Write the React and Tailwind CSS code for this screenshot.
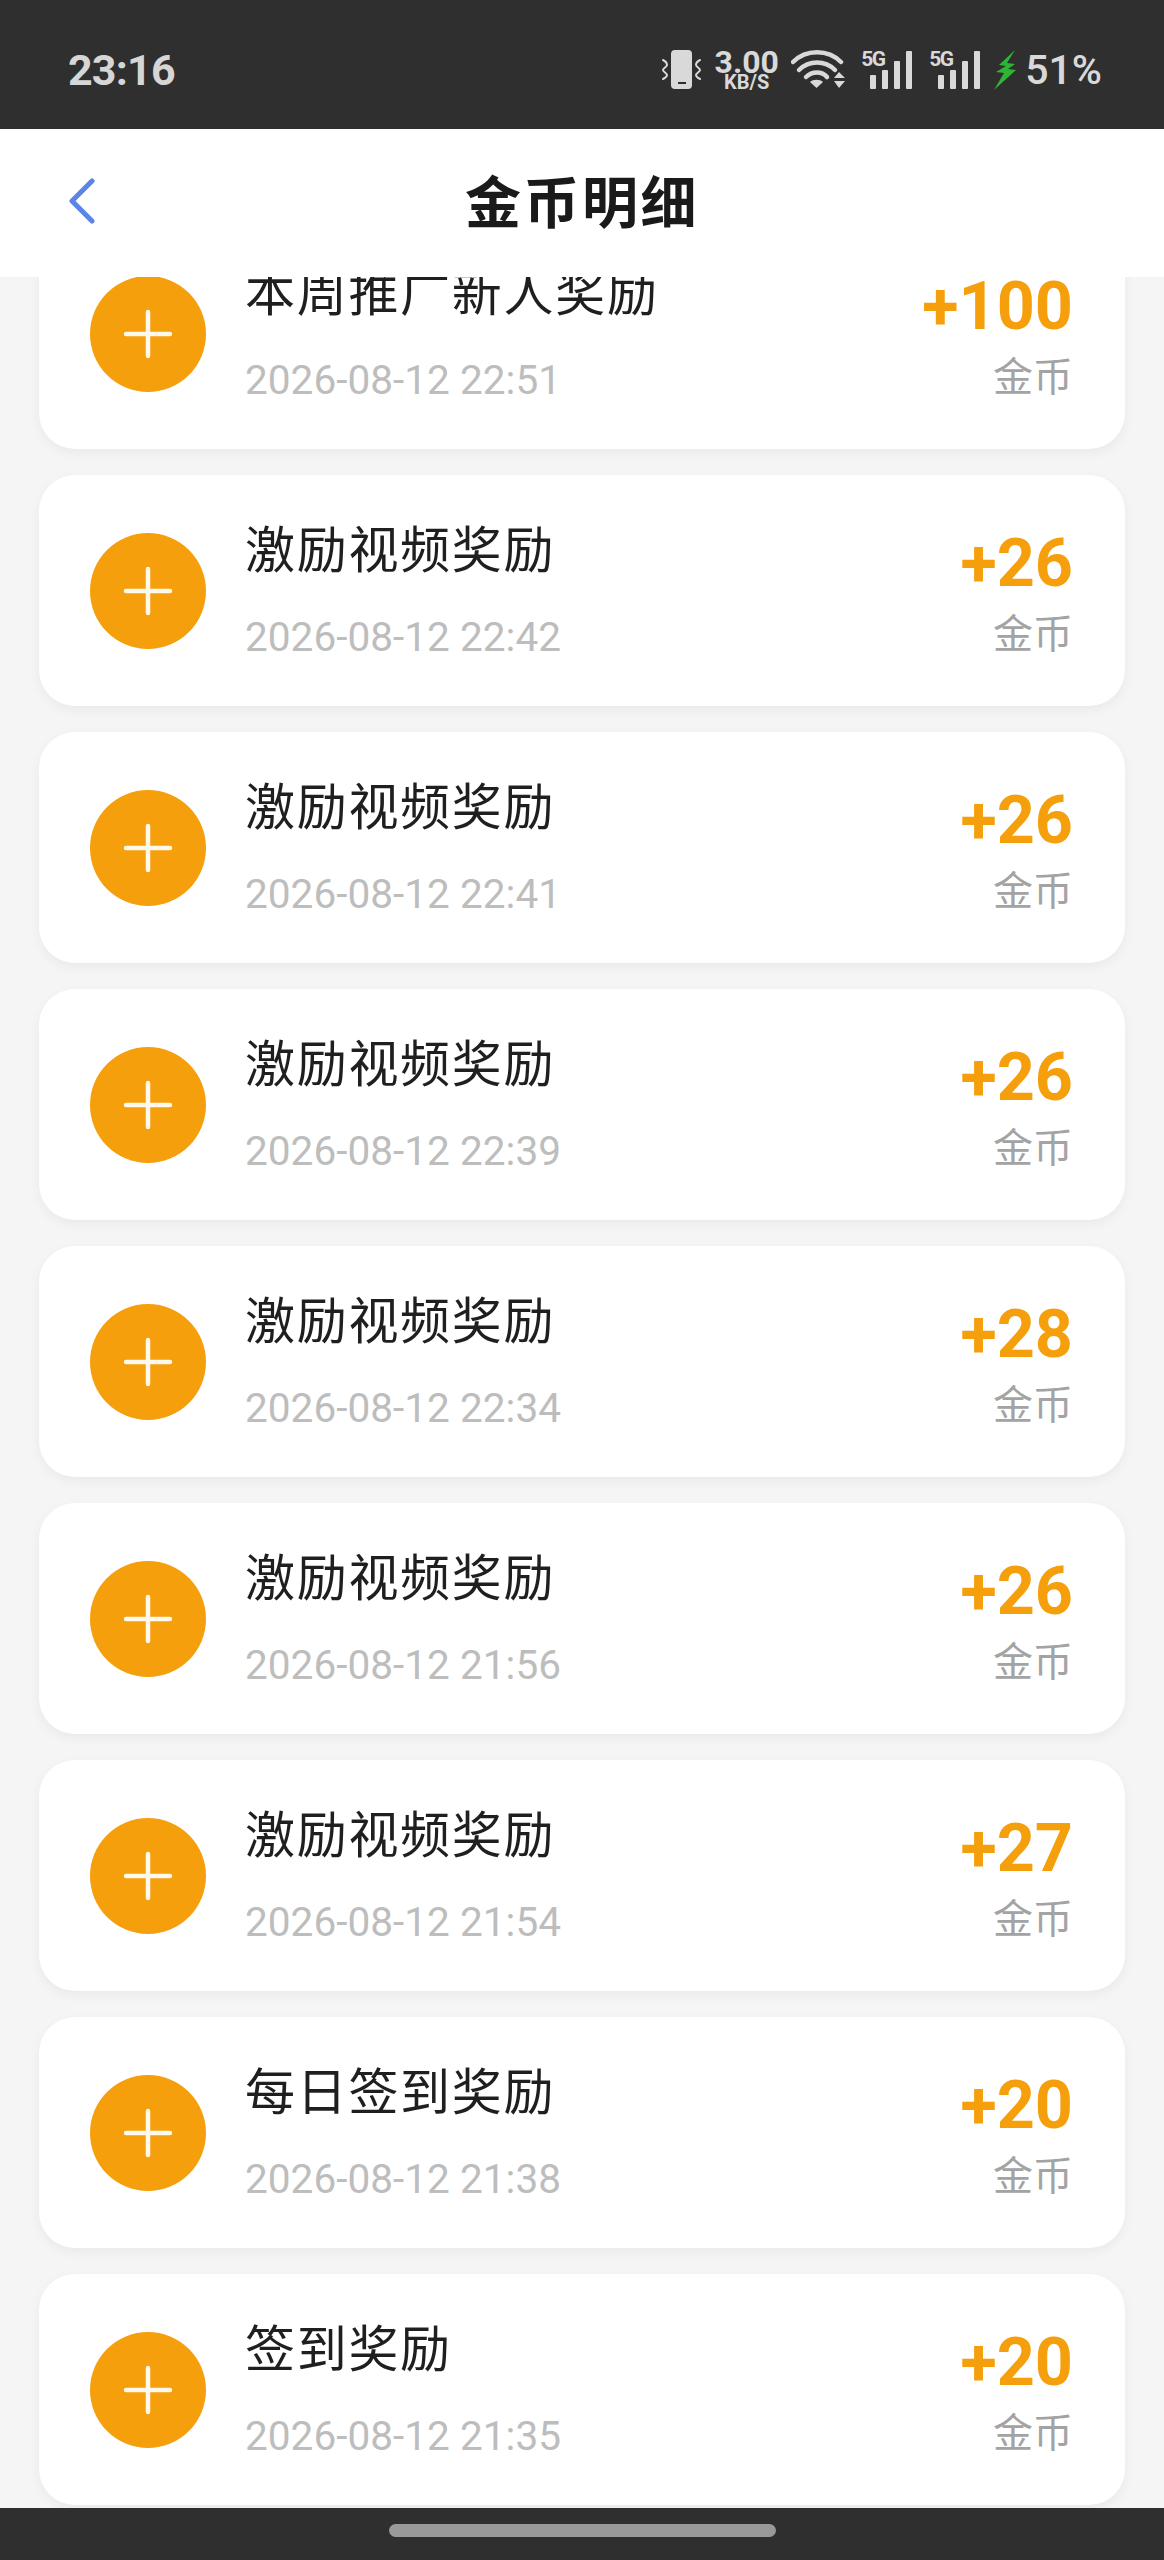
const records = [
  { title: "本周推广新人奖励", time: "2026-08-12 22:51", amount: "+100" },
  { title: "激励视频奖励", time: "2026-08-12 22:42", amount: "+26" },
  { title: "激励视频奖励", time: "2026-08-12 22:41", amount: "+26" },
  { title: "激励视频奖励", time: "2026-08-12 22:39", amount: "+26" },
  { title: "激励视频奖励", time: "2026-08-12 22:34", amount: "+28" },
  { title: "激励视频奖励", time: "2026-08-12 21:56", amount: "+26" },
  { title: "激励视频奖励", time: "2026-08-12 21:54", amount: "+27" },
  { title: "每日签到奖励", time: "2026-08-12 21:38", amount: "+20" },
  { title: "签到奖励", time: "2026-08-12 21:35", amount: "+20" },
];

function VibrateIcon() {
  return (
    <svg width="41" height="40" viewBox="0 0 41 40" fill="none">
      <rect x="10" y="0" width="21" height="39" rx="4" fill="#d9d9d9" />
      <rect x="17" y="32" width="8" height="2" fill="#2f2f2f" />
      <path d="M2 10c2 1 4 3 4 5s-4 3-4 5 4 3 4 5-2 3-4 4M39 10c-2 1-4 3-4 5s4 3 4 5-4 3-4 5 2 3 4 4" stroke="#d9d9d9" strokeWidth="2" strokeLinecap="round" />
    </svg>
  );
}

function WifiIcon() {
  return (
    <svg width="55" height="40" viewBox="0 0 55 40" fill="none">
      <path d="M2 12C15 -1 37 -1 50 12" stroke="#d9d9d9" strokeWidth="4.5" strokeLinecap="round" />
      <path d="M8 20C18 10 34 10 44 20" stroke="#d9d9d9" strokeWidth="4.5" strokeLinecap="round" />
      <path d="M15 27C21 21 31 21 36 27" stroke="#d9d9d9" strokeWidth="4.5" strokeLinecap="round" />
      <path d="M19 32C22 29 29 29 32 32L25.5 38Z" fill="#d9d9d9" />
      <path d="M43 28l5-6 6 6ZM43 31l5 7 6-7Z" fill="#d9d9d9" />
    </svg>
  );
}

function SignalIcon() {
  return (
    <div className="relative w-[51px] h-[40px]">
      <span className="absolute left-0 top-[-3px] text-[21px] leading-[24px] font-bold tracking-[-1.5px] text-[#d9d9d9]">5G</span>
      <div className="absolute right-0 bottom-[1px] flex items-end gap-[6px]">
        <div className="w-[6px] h-[14px] rounded-[1px] bg-[#d9d9d9]" />
        <div className="w-[6px] h-[19px] rounded-[1px] bg-[#d9d9d9]" />
        <div className="w-[6px] h-[28px] rounded-[1px] bg-[#d9d9d9]" />
        <div className="w-[6px] h-[38px] rounded-[1px] bg-[#d9d9d9]" />
      </div>
    </div>
  );
}

function BoltIcon() {
  return (
    <svg width="22" height="40" viewBox="0 0 22 40">
      <path d="M21 0L5 15l7 1-10 6 8 1L0 40 22 20l-8-1 7-5-8-1Z" fill="#2fb536" />
    </svg>
  );
}

function StatusBar() {
  return (
    <div className="h-[129px] shrink-0 bg-[#2f2f2f] flex items-center justify-between pl-[68px] pr-[62px] pt-[10px] text-[#d9d9d9] font-['Roboto',sans-serif]">
      <span className="text-[43px] leading-[50px] font-bold tracking-[-0.8px] text-[#d6d6d6]">23:16</span>
      <div className="flex items-center h-[40px]">
        <VibrateIcon />
        <div className="ml-[12px] w-[65px] flex flex-col items-center">
          <span className="text-[32px] leading-[24px] font-bold">3.00</span>
          <span className="text-[20px] leading-[16px] font-bold">KB/S</span>
        </div>
        <div className="ml-[12px]"><WifiIcon /></div>
        <div className="ml-[15px]"><SignalIcon /></div>
        <div className="ml-[17px]"><SignalIcon /></div>
        <div className="ml-[14px]"><BoltIcon /></div>
        <span className="ml-[9px] text-[41px] leading-[40px] font-medium">51%</span>
      </div>
    </div>
  );
}

function Header() {
  return (
    <header className="relative z-10 h-[148px] shrink-0 bg-white flex items-center justify-center pb-[8px]">
      <button type="button" className="absolute left-[67px] top-[48px]">
        <svg width="28" height="48" viewBox="0 0 28 48" fill="none" className="block">
          <path d="M25 4L5 24l20 20" stroke="#5b83e8" strokeWidth="5" strokeLinecap="round" strokeLinejoin="round" />
        </svg>
      </button>
      <h1 className="text-[56px] leading-[70px] font-bold tracking-[2.5px] text-[#1a1a1a] font-['Noto_Sans_CJK_SC',sans-serif]">金币明细</h1>
    </header>
  );
}

function RecordCard({ record }) {
  return (
    <div className="h-[231px] shrink-0 rounded-[36px] bg-white shadow-[0_4px_12px_rgba(0,0,0,0.05)] pl-[51px] pr-[52px] flex items-center">
      <div className="w-[116px] h-[116px] shrink-0 rounded-full bg-[#f59f0c] flex items-center justify-center">
        <svg width="52" height="52" viewBox="0 0 52 52" fill="none">
          <path d="M26 4v44M4 26h44" stroke="#fff8ec" strokeWidth="4.5" strokeLinecap="round" />
        </svg>
      </div>
      <div className="ml-[39px] flex-1 min-w-0 pb-[3px]">
        <div className="text-[50px] leading-[60px] tracking-[1.7px] text-[#1f1f1f] font-['Noto_Sans_CJK_SC',sans-serif]">{record.title}</div>
        <div className="mt-[36px] text-[40.6px] leading-[50px] text-[#bdbdbd] font-['Roboto',sans-serif]">{record.time}</div>
      </div>
      <div className="text-right pt-[3px]">
        <div className="text-[66.5px] leading-[70px] font-bold text-[#f59f0c] font-['Roboto',sans-serif]">{record.amount}</div>
        <div className="mt-[8px] text-[40px] leading-[50px] text-[#a3a3a3] font-['Noto_Sans_CJK_SC',sans-serif]">金币</div>
      </div>
    </div>
  );
}

export default function App() {
  return (
    <div className="relative w-[1164px] h-[2560px] overflow-hidden bg-[#f5f5f5] flex flex-col">
      <StatusBar />
      <Header />
      <main className="flex-1 min-h-0 overflow-hidden -mt-[59px] px-[39px] flex flex-col gap-[26px]">
        {records.map((record, index) => (
          <RecordCard key={index} record={record} />
        ))}
      </main>
      <div className="relative z-10 h-[52px] shrink-0 bg-[#2f2f2f] flex justify-center pt-[16px]">
        <div className="w-[387px] h-[13px] rounded-full bg-[#999999]" />
      </div>
    </div>
  );
}
